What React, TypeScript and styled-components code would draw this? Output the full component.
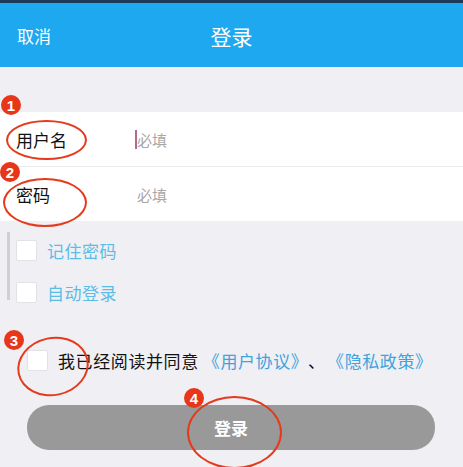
import React from "react";
import styled, { createGlobalStyle } from "styled-components";

const GlobalStyle = createGlobalStyle`
  html, body {
    margin: 0;
    padding: 0;
    background: #efeff4;
  }
  body {
    font-family: "Noto Sans CJK SC", "Noto Sans", sans-serif;
  }
`;

const Page = styled.div`
  position: relative;
  width: 463px;
  height: 467px;
  overflow: hidden;
  background: #efeff4;
`;

const Header = styled.header`
  display: grid;
  grid-template-columns: 1fr auto 1fr;
  align-items: center;
  height: 64px;
  border-top: 3px solid #1b3a57;
  background: #1da8ef;
  color: #fff;
`;

const Cancel = styled.span`
  padding-left: 17px;
  font-size: 17px;
  line-height: 1;
`;

const Title = styled.h1`
  margin: 2px 0 0;
  font-size: 21px;
  font-weight: 400;
  line-height: 1;
`;

const Form = styled.div`
  margin-top: 45px;
  background: #fff;
`;

const Row = styled.div<{ $divider?: boolean }>`
  display: flex;
  align-items: center;
  height: 54px;
  padding-left: 16px;
  border-bottom: ${(p) => (p.$divider ? "1px solid #ececec" : "none")};
`;

const Label = styled.span`
  width: 121px;
  font-size: 17px;
  color: #111;
`;

const Field = styled.span<{ $focused?: boolean }>`
  position: relative;
  font-size: 15px;
  color: #a8a8a8;
  &::before {
    content: "";
    display: ${(p) => (p.$focused ? "block" : "none")};
    position: absolute;
    left: -2px;
    top: 1px;
    width: 2px;
    height: 19px;
    background: #b06a8c;
  }
`;

const Options = styled.div`
  display: flex;
  flex-direction: column;
  gap: 22px;
  height: 60px;
  margin: 11px 0 0 7px;
  padding: 8px 0 0 6px;
  border-left: 3px solid #cfcfd4;
`;

const Option = styled.label`
  display: flex;
  align-items: center;
  gap: 10px;
  height: 20px;
  font-size: 17px;
  letter-spacing: 0.5px;
  color: #5bbde6;
`;

const Box = styled.span`
  display: inline-block;
  flex: none;
  width: 19px;
  height: 19px;
  background: #fff;
  border: 1px solid #e2e2e6;
  border-radius: 2px;
`;

const Agreement = styled.div`
  display: flex;
  align-items: center;
  height: 20px;
  margin: 50px 0 0 27px;
  font-size: 17px;
  letter-spacing: 0.6px;
  color: #111;
  white-space: nowrap;
`;

const AgreeText = styled.span`
  margin-left: 10px;
`;

const Link = styled.span`
  margin-left: 4px;
  color: #3fa3dc;
`;

const Sep = styled.span`
  margin: 0 6px 0 8px;
`;

const Submit = styled.button`
  display: block;
  width: 408px;
  height: 45px;
  margin: 35px 0 0 27px;
  border: none;
  border-radius: 22px;
  background: #999999;
  color: #fff;
  font-family: inherit;
  font-size: 17px;
  font-weight: 700;
`;

const Ring = styled.div`
  position: absolute;
  border: 2px solid #e53a1c;
  border-radius: 50%;
  pointer-events: none;
`;

const Badge = styled.div`
  position: absolute;
  display: flex;
  align-items: center;
  justify-content: center;
  width: 20px;
  height: 20px;
  border-radius: 50%;
  background: #e8361a;
  color: #fff;
  font-family: "Liberation Sans", Arial, sans-serif;
  font-size: 15px;
  font-weight: 700;
`;

const marks = [
  { n: 1, badge: [1, 95], ring: [6, 120, 77, 36, 0] },
  { n: 2, badge: [0, 162], ring: [3, 178, 80, 45, 0] },
  { n: 3, badge: [4, 330], ring: [17, 337, 68, 55, -12] },
  { n: 4, badge: [184, 388], ring: [187, 396, 91, 69, 0] },
];

export default function App() {
  return (
    <Page>
      <GlobalStyle />
      <Header>
        <Cancel>取消</Cancel>
        <Title>登录</Title>
        <span />
      </Header>

      <Form>
        <Row $divider>
          <Label>用户名</Label>
          <Field $focused>必填</Field>
        </Row>
        <Row>
          <Label>密码</Label>
          <Field>必填</Field>
        </Row>
      </Form>

      <Options>
        <Option>
          <Box />
          记住密码
        </Option>
        <Option>
          <Box />
          自动登录
        </Option>
      </Options>

      <Agreement>
        <Box />
        <AgreeText>
          我已经阅读并同意<Link>《用户协议》</Link>
          <Sep>、</Sep>
          <Link>《隐私政策》</Link>
        </AgreeText>
      </Agreement>

      <Submit>登录</Submit>

      {marks.map((m) => (
        <React.Fragment key={m.n}>
          <Ring
            style={{
              left: m.ring[0],
              top: m.ring[1],
              width: m.ring[2],
              height: m.ring[3],
              transform: `rotate(${m.ring[4]}deg)`,
            }}
          />
          <Badge style={{ left: m.badge[0], top: m.badge[1] }}>{m.n}</Badge>
        </React.Fragment>
      ))}
    </Page>
  );
}
